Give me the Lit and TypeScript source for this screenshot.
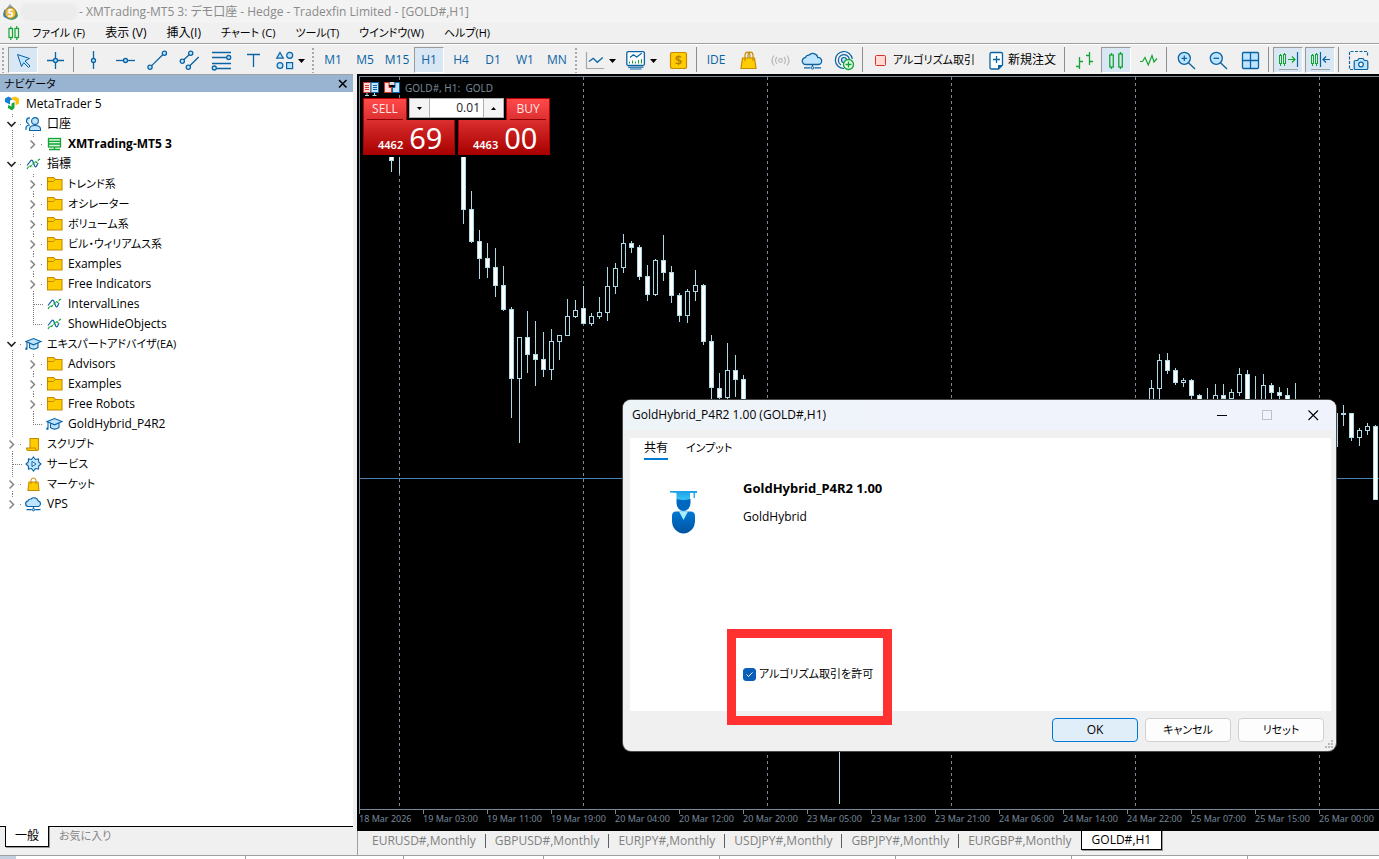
import { LitElement, html, svg, css, nothing, TemplateResult } from "lit";
import { customElement, property, state } from "lit/decorators.js";
import { classMap } from "lit/directives/class-map.js";

/* ---------- shared pieces ---------- */

const B = "#0a63a3";
const L = "#bfe4ff";
const G = "#12a533";
const Y = "#ffcc00";
const O = "#c68a00";

/* Labels that contain kana are set one step smaller than Latin and kanji ones. */
const hasKana = (s: string) => /[\u3041-\u30ff]/.test(s);

const base = css`
  :host {
    font-family: "Open Sans", "Noto Sans CJK JP", sans-serif;
    font-size: 12px;
    line-height: 16px;
    font-feature-settings: "palt";
    color: #000;
  }
  * {
    box-sizing: border-box;
  }
  button {
    font: inherit;
    font-feature-settings: inherit;
    color: inherit;
    background: none;
    border: 0;
    padding: 0;
    margin: 0;
    white-space: nowrap;
  }
  svg {
    display: block;
    flex: none;
  }
  .kana {
    font-size: 11px;
  }
`;

const candlePair = (x1: number, x2: number) => svg`
  <g stroke=${G} fill="none">
    <path d="M${x1 + 1} 6v2M${x1 + 1} 16v2M${x2 + 1} 5v2M${x2 + 1} 15v3"/>
    <rect x=${x1} y="7.5" width="2" height="8"/><rect x=${x2} y="6.5" width="2" height="9"/>
  </g>`;

const ICONS: Record<string, unknown> = {
  cursor: svg`<path d="M6.5 6.5 18.5 10.5 14 13 19 18 17.5 19.5 12.7 14.7 10.5 18.5Z" fill=${L} stroke=${B}/>`,
  cross: svg`<path d="M12.5 4v17M4 12.5h17" stroke=${B} stroke-width="1.3"/><circle cx="12.5" cy="12.5" r="2" fill=${L} stroke=${B} stroke-width="1.3"/>`,
  vline: svg`<path d="M12.5 3v18" stroke=${B} stroke-width="1.3"/><circle cx="12.5" cy="12.5" r="2" fill=${L} stroke=${B} stroke-width="1.3"/>`,
  hline: svg`<path d="M3 12.5h19" stroke=${B} stroke-width="1.3"/><circle cx="12.5" cy="12.5" r="2" fill=${L} stroke=${B} stroke-width="1.3"/>`,
  trend: svg`<g fill=${L} stroke=${B} stroke-width="1.3"><path d="M6.7 17.6 17.7 6.8"/><circle cx="5" cy="19.3" r="2.1"/><circle cx="19.4" cy="5.2" r="2.1"/></g>`,
  channel: svg`<g fill=${L} stroke=${B} stroke-width="1.3"><path d="M6.8 11.8 12.2 6.8M12.8 17.8 21.7 9"/><circle cx="5.3" cy="13.3" r="2.1"/><circle cx="13.7" cy="5.3" r="2.1"/><circle cx="11.3" cy="19.3" r="2.1"/></g>`,
  fibo: svg`<g fill=${L} stroke=${B} stroke-width="1.3"><path d="M3 4.5h19M3 9.5h14.5M3 15.5h19M7.5 20.5H22"/><circle cx="19.7" cy="9.5" r="2"/><circle cx="5.3" cy="20" r="2"/></g>`,
  text: svg`<path d="M6 6.5h13M12.5 6.5V19" stroke=${B} stroke-width="1.3"/>`,
  shapes: svg`<g fill=${L} stroke=${B} stroke-width="1.2"><path d="M7 4.5 10.3 10.2H3.7Z"/><circle cx="16.7" cy="7.3" r="3"/><circle cx="7" cy="17.5" r="2.9"/><rect x="13.6" y="14.6" width="6" height="6"/></g>`,
  chartline: svg`<path d="M2.5 4v16.5H20" fill="none" stroke="#a6a6a6" stroke-width="1.2"/><path d="M5 13.5 9.3 10.3 13.3 14.3 18.8 9.5" fill="none" stroke=${B} stroke-width="1.3"/>`,
  indicators: svg`<rect x="1.8" y="3.6" width="17.6" height="13.8" rx="1.5" fill="#fff" stroke=${B} stroke-width="1.3"/><path d="M5 9.5 8.3 6.8 11.7 9 16.7 5.3" fill="none" stroke=${B} stroke-width="1.2"/><path d="M4.5 13.5v2M7.5 12.5v3M10.5 13.5v2M13.5 12v3.5M16.5 11v4.5" stroke=${G}/><path d="M3 19.2h15.5M5 21h11.5" stroke=${B} stroke-width="1.2"/>`,
  dollar: svg`<rect x="4.5" y="4.5" width="16" height="16" rx="1.5" fill=${Y} stroke=${O} stroke-width="1.2"/><text x="12.5" y="17" text-anchor="middle" font-size="13" font-weight="600" fill="#b87a00">$</text>`,
  bag: svg`<path d="M6.500 10h12l1.500 10.500H5Z" fill=${Y} stroke=${O} stroke-width="1.2"/><path d="M9 13V8q0-3.800 2.500-3.800T14 8v2M12 10V8q0-3.800 2.500-3.800T17 8v5" fill="none" stroke=${O} stroke-width="1.2"/>`,
  signal: svg`<g fill="none" stroke="#b9b9b9" stroke-width="1.2"><circle cx="12.500" cy="12.500" r="1.800"/><path d="M9 9q-3 3.500 0 7M16 9q3 3.500 0 7M6 7.500q-4 5 0 10M19 7.500q4 5 0 10"/></g>`,
  cloud: svg`<path d="M7 16.500H6a3.500 3.500 0 0 1-.5-7 3.300 3.300 0 0 1 3.500-2.300A5 5 0 0 1 17.800 9.500a3.500 3.500 0 0 1 .7 7Z" fill=${L} stroke=${B} stroke-width="1.3"/><path d="M12.500 16.500v2M4 19.800h6.500M14.500 19.800H21" stroke=${B} stroke-width="1.200"/><circle cx="12.500" cy="19.800" r="1.300" fill=${L} stroke=${B}/>`,
  vps: svg`<g fill="none" stroke=${B} stroke-width="1.2"><path d="M12 20.500A8.500 8.500 0 1 1 20.300 11M9 17A5.600 5.600 0 1 1 17.500 11.500"/><circle cx="12" cy="12" r="2.500" fill=${L}/></g><circle cx="16.500" cy="16.500" r="5" fill="#e5f9e8" stroke=${G} stroke-width="1.300"/><path d="M16.500 13.500v6M13.500 16.500h6" stroke=${G} stroke-width="1.300"/>`,
  algo: svg`<rect x="6.500" y="7.500" width="10" height="10" rx="1" fill="#ffd9d4" stroke="#d9302c"/>`,
  order: svg`<path d="M7.500 4.500h9.500q1.500 0 1.500 1.500v11l-4 4H7.500Q6 21 6 19.500V6q0-1.500 1.500-1.500Z" fill="#fff" stroke=${B} stroke-width="1.300"/><path d="M14 21.500v-4.500h5Z" fill=${B}/><path d="M12.500 8v7M9 11.500h7" stroke=${B} stroke-width="1.300"/>`,
  bars: svg`<path d="M7.500 9v12M4 18.500h3.500M7.500 13.500H11M17.500 4v13M14 7.500h3.500M17.500 13.500H21" stroke=${G} stroke-width="1.300"/>`,
  candles: svg`<g stroke=${G} fill="none" stroke-width="1.300"><path d="M7.500 5v2M7.500 19v2M16.500 4v2M16.500 19v2"/><rect x="5.800" y="7" width="3.500" height="12"/><rect x="14.800" y="6" width="3.500" height="13"/></g>`,
  zigzag: svg`<path d="M4 13.500h2.500L9 9.500 12.300 17 16 7.500 18 14 21 10.500" fill="none" stroke=${G} stroke-width="1.200"/>`,
  zoomin: svg`<g stroke=${B} stroke-width="1.300"><path d="M14.500 14.800 21 21"/><circle cx="10.300" cy="10.300" r="6" fill=${L}/><path d="M10.300 7.500v5.600M7.500 10.300h5.600"/></g>`,
  zoomout: svg`<g stroke=${B} stroke-width="1.300"><path d="M14.500 14.800 21 21"/><circle cx="10.300" cy="10.300" r="6" fill=${L}/><path d="M7.500 10.300h5.600"/></g>`,
  tile: svg`<g stroke=${B} stroke-width="1.300"><rect x="4.500" y="4.500" width="16" height="16" rx="1" fill=${L}/><path d="M12.500 4.500v16M4.500 12.500h16"/></g>`,
  scroll: svg`${candlePair(3.5, 7.5)}<path d="M12 11.500h7M16 8.500l3 3-3 3" fill="none" stroke=${G} stroke-width="1.200"/><path d="M21.500 4v15" stroke=${B} stroke-width="1.200"/><path d="M3 21.500h19" stroke="#a0a0a0"/>`,
  shift: svg`${candlePair(3.5, 7.5)}<path d="M22 11.500h-7M18 8.500l-3 3 3 3M12.500 4v15" fill="none" stroke=${B} stroke-width="1.200"/><path d="M3 21.500h19" stroke="#a0a0a0"/>`,
  camera: svg`<path d="M7 21.500H3.500V3.500h18V9" fill="none" stroke=${B} stroke-width="1.200" stroke-dasharray="3 1.500"/><path d="M9.500 12.500h2l1.500-2h4l1.500 2h2q1.300 0 1.300 1.300v6.400q0 1.300-1.300 1.300h-11q-1.300 0-1.300-1.300v-6.400q0-1.300 1.300-1.300Z" fill=${L} stroke=${B} stroke-width="1.200"/><circle cx="15" cy="16.500" r="2.300" fill="#fff" stroke=${B} stroke-width="1.200"/>`,
};

const icon = (name: string) =>
  html`<svg width="24" height="24" viewBox="0 0 24 24" aria-hidden="true">${ICONS[name]}</svg>`;

/* ---------- toolbar ---------- */

type Tool =
  | { kind: "grip" | "sep" }
  | { kind: "icon" | "split"; icon: string; label: string; on?: boolean }
  | { kind: "text"; label: string; on?: boolean }
  | { kind: "wide"; icon: string; label: string };

const TOOLS: Tool[] = [
  { kind: "grip" },
  { kind: "icon", icon: "cursor", label: "カーソル", on: true },
  { kind: "icon", icon: "cross", label: "クロスヘア" },
  { kind: "sep" },
  { kind: "icon", icon: "vline", label: "垂直線" },
  { kind: "icon", icon: "hline", label: "水平線" },
  { kind: "icon", icon: "trend", label: "トレンドライン" },
  { kind: "icon", icon: "channel", label: "チャネル" },
  { kind: "icon", icon: "fibo", label: "フィボナッチ" },
  { kind: "icon", icon: "text", label: "テキスト" },
  { kind: "split", icon: "shapes", label: "図形" },
  { kind: "grip" },
  ...["M1", "M5", "M15", "H1", "H4", "D1", "W1", "MN"].map(
    (label): Tool => ({ kind: "text", label, on: label === "H1" })
  ),
  { kind: "grip" },
  { kind: "split", icon: "chartline", label: "チャート種別" },
  { kind: "split", icon: "indicators", label: "インディケータ" },
  { kind: "icon", icon: "dollar", label: "取引" },
  { kind: "sep" },
  { kind: "text", label: "IDE" },
  { kind: "icon", icon: "bag", label: "マーケット" },
  { kind: "icon", icon: "signal", label: "シグナル" },
  { kind: "icon", icon: "cloud", label: "VPS" },
  { kind: "icon", icon: "vps", label: "接続" },
  { kind: "sep" },
  { kind: "wide", icon: "algo", label: "アルゴリズム取引" },
  { kind: "wide", icon: "order", label: "新規注文" },
  { kind: "sep" },
  { kind: "icon", icon: "bars", label: "バーチャート" },
  { kind: "icon", icon: "candles", label: "ローソク足", on: true },
  { kind: "icon", icon: "zigzag", label: "ラインチャート" },
  { kind: "sep" },
  { kind: "icon", icon: "zoomin", label: "拡大" },
  { kind: "icon", icon: "zoomout", label: "縮小" },
  { kind: "icon", icon: "tile", label: "整列" },
  { kind: "sep" },
  { kind: "icon", icon: "scroll", label: "自動スクロール", on: true },
  { kind: "icon", icon: "shift", label: "チャートシフト", on: true },
  { kind: "sep" },
  { kind: "icon", icon: "camera", label: "スクリーンショット" },
];

@customElement("tool-bar")
class ToolBar extends LitElement {
  static styles = [
    base,
    css`
      :host {
        display: flex;
        height: 30px;
        align-items: center;
        background: #f0f0f0;
        border-top: 1px solid #fff;
        overflow: hidden;
      }
      .grip {
        flex: none;
        width: 7px;
        height: 26px;
        background: radial-gradient(circle at 2px 2px, #a8a8a8 1px, transparent 1px) 1px 0 / 4px 4px repeat-y;
      }
      .sep {
        flex: none;
        width: 6px;
        height: 25px;
        background: linear-gradient(#8d8d8d, #8d8d8d) 2px 0 / 1px 100% no-repeat;
      }
      .tool {
        flex: none;
        width: 30px;
        height: 26px;
        margin: 0 1px;
        border: 1px solid transparent;
        display: flex;
        align-items: center;
        justify-content: center;
        color: #0a63a3;
      }
      .on {
        background: #d9e6f4;
        border-color: #9a9a9a #fff #fff #9a9a9a;
      }
      .split {
        width: 39px;
        justify-content: flex-start;
        padding-left: 2px;
      }
      .wide {
        width: auto;
        color: #000;
        padding: 0 4px 0 1px;
      }
    `,
  ];

  private tool(t: Tool): TemplateResult {
    switch (t.kind) {
      case "grip":
      case "sep":
        return html`<span class=${t.kind}></span>`;
      case "text":
        return html`<button class=${classMap({ tool: true, on: !!t.on })}>${t.label}</button>`;
      case "wide":
        return html`<button class=${classMap({ tool: true, wide: true, kana: hasKana(t.label) })}>
          ${icon(t.icon)}<span>${t.label}</span>
        </button>`;
      case "split":
        return html`<button class="tool split" aria-label=${t.label}>
          ${icon(t.icon)}<svg width="11" height="8" viewBox="0 0 11 8"><path d="M1 3h7L4.500 7Z" fill="#000" /></svg>
        </button>`;
      case "icon":
        return html`<button class=${classMap({ tool: true, on: !!t.on })} aria-label=${t.label}>
          ${icon(t.icon)}
        </button>`;
    }
  }

  render() {
    return TOOLS.map((t) => this.tool(t));
  }
}

/* ---------- navigator ---------- */

const TREE_ICONS: Record<string, unknown> = {
  logo: svg`<path d="M4 4.500 7.500 2.500 12 5 9 6.500v4L4 8Z" fill="#1480d8"/><path d="M10 4 14 2.500l4 2v5l-3.500 2V7L11 5.500Z" fill="#ffc20a"/><path d="M10.500 9.500 13.500 8v6L11 16.500 7 14v-3l3.500 1.500Z" fill="#19a83b"/>`,
  people: svg`<g fill=${L} stroke=${B} stroke-width="1.100"><path d="M4 16v-2q0-3 4-3M8 4a3 3 0 0 0-1 6"/><circle cx="13" cy="7" r="3.400"/><path d="M7.500 16.500v-1.500q0-3.500 5.500-3.500t5.500 3.500v1.500Z"/></g>`,
  server: svg`<g fill="none" stroke=${G} stroke-width="1.300"><rect x="5.500" y="4.500" width="12" height="8.500" fill="#d5f5db"/><path d="M5.500 7.300h12M5.500 10h12M11.500 13v2.500M6 15.500h11"/></g>`,
  indicator: svg`<g fill="none" stroke-width="1.200"><path d="M5 11.500 9 6.500q1-.8 1.700.5l2 5q.8 1.500 1.800.3L16 9" stroke=${B}/><path d="M5 15l2-3 1.500.5L11 10l2-2.500 1.500 1L16.500 6l1.500-1" stroke=${G} stroke-dasharray="3 1"/></g>`,
  folder: svg`<path d="M4.500 3.500h6l2 2h6.500v10.500h-14.500Z" fill=${Y} stroke=${O} stroke-width="1.100"/><path d="M4.500 7.500h6l2-2" fill="none" stroke=${O}/>`,
  cap: svg`<g fill=${L} stroke=${B} stroke-width="1.100"><path d="M7.500 9v4.500q4 3.300 8.500 0V9"/><path d="M4 7.500 11.500 4.500l7.500 3L11.500 10.800Z"/><path d="M5 8v7.500M4 13.500v2.500" fill="none"/></g>`,
  script: svg`<path d="M8 4.500h8.500v11q-.5 1-1.500 1H6q-1.500-.5-1.500-2.500H8Z" fill=${Y} stroke=${O} stroke-width="1.100"/><path d="M8 14h5.500q0 2 1.500 2.500" fill="none" stroke=${O}/>`,
  gear: svg`<path d="M11.500 3l2 2.500 3-.5.2 3L19 10l-2.300 2-.2 3-3-.5L11.500 17l-2-2.500-3 .5-.2-3L4 10l2.300-2L6.500 5l3 .5Z" fill=${L} stroke=${B} stroke-width="1.100"/><path d="M10 7.500v5L14 10Z" fill="#fff" stroke=${B}/>`,
  market: svg`<path d="M7 8h9l1 8.500H6Z" fill=${Y} stroke=${O} stroke-width="1.100"/><path d="M9 10V6.500q0-2.500 2.500-2.500t2.500 2.500V10" fill="none" stroke=${O}/>`,
  cloud: svg`<path d="M6.500 12.500H6a2.900 2.900 0 0 1 0-5.700A3 3 0 0 1 9 5 4.300 4.300 0 0 1 16.100 6.800a3 3 0 0 1 .6 5.700Z" fill=${L} stroke=${B} stroke-width="1.200"/><path d="M11.500 12.500v2M4.500 15.700h5.300M13.200 15.700H18.500" stroke=${B} stroke-width="1.200"/><circle cx="11.500" cy="15.700" r="1.200" fill=${L} stroke=${B}/>`,
};

/* Guide cells, one per indent level:
   o open branch, c closed branch, e closed last branch, t tee, l elbow, v line */
const GUIDES: Record<string, unknown> = {
  o: svg`<path d="M11.500 0v3M11.500 16v4M19 10.500h3" class="dots"/><path d="M6.500 8 10.500 12 14.500 8" fill="none" stroke="#222" stroke-width="1.600"/>`,
  c: svg`<path d="M11.500 0v3M11.500 17v3M19 10.500h3" class="dots"/><path d="M8.500 6.500 12.500 10.500 8.500 14.500" fill="none" stroke="#858585" stroke-width="1.500"/>`,
  e: svg`<path d="M11.500 0v3M19 10.500h3" class="dots"/><path d="M8.500 6.500 12.500 10.500 8.500 14.500" fill="none" stroke="#858585" stroke-width="1.500"/>`,
  t: svg`<path d="M11.500 0v20M12 10.500h9" class="dots"/>`,
  l: svg`<path d="M11.500 0v10.500h9" class="dots"/>`,
  v: svg`<path d="M11.500 0v20" class="dots"/>`,
};

const TREE: Array<[string, string, string, boolean?]> = [
  ["", "logo", "MetaTrader 5"],
  ["o", "people", "口座"],
  ["ve", "server", "XMTrading-MT5 3", true],
  ["o", "indicator", "指標"],
  ["vc", "folder", "トレンド系"],
  ["vc", "folder", "オシレーター"],
  ["vc", "folder", "ボリューム系"],
  ["vc", "folder", "ビル・ウィリアムス系"],
  ["vc", "folder", "Examples"],
  ["vc", "folder", "Free Indicators"],
  ["vt", "indicator", "IntervalLines"],
  ["vl", "indicator", "ShowHideObjects"],
  ["o", "cap", "エキスパートアドバイザ(EA)"],
  ["vc", "folder", "Advisors"],
  ["vc", "folder", "Examples"],
  ["vc", "folder", "Free Robots"],
  ["vl", "cap", "GoldHybrid_P4R2"],
  ["c", "script", "スクリプト"],
  ["t", "gear", "サービス"],
  ["c", "market", "マーケット"],
  ["e", "cloud", "VPS"],
];

@customElement("navigator-panel")
class NavigatorPanel extends LitElement {
  static styles = [
    base,
    css`
      :host {
        display: flex;
        flex-direction: column;
        min-height: 0;
        background: #f0f0f0;
      }
      .head {
        display: flex;
        align-items: center;
        justify-content: space-between;
        height: 18px;
        padding: 0 5px 0 4px;
        border-top: 1px solid #a0a0a0;
        background: #99b4d1;
      }
      .tree {
        flex: 1;
        min-height: 0;
        overflow: hidden;
        margin: 0;
        padding: 2px 0 0 1px;
        list-style: none;
        background: #fff;
      }
      .row {
        display: flex;
        align-items: center;
        height: 20px;
      }
      .name {
        padding-left: 3px;
        white-space: nowrap;
      }
      .bold {
        font-weight: 700;
      }
      .dots {
        fill: none;
        stroke: #7d7d7d;
        stroke-dasharray: 1 1;
        shape-rendering: crispEdges;
      }
      .tabs {
        display: flex;
        height: 29px;
        padding-left: 5px;
        border-top: 1px solid #000;
        color: #858585;
      }
      .tab {
        height: 18px;
        padding: 0 10px;
      }
      .tab.active {
        margin-top: -1px;
        height: 21px;
        color: #000;
        background: #fff;
        border: solid #000;
        border-width: 0 1px 1px;
        box-shadow: 1px 1px 0 #999;
        padding: 0 9px;
      }
    `,
  ];

  render() {
    return html`
      <div class="head">
        <span class="kana">ナビゲータ</span>
        <button aria-label="閉じる">
          <svg width="10" height="10" viewBox="0 0 10 10">
            <path d="M1 1l7.500 7.500M8.500 1 1 8.500" stroke="#000" stroke-width="1.500" />
          </svg>
        </button>
      </div>
      <ul class="tree">
        ${TREE.map(
          ([guides, ic, name, bold]) => html`<li class="row">
            ${[...guides].map((g) => html`<svg width="21" height="20" viewBox="0 0 21 20">${GUIDES[g] ?? nothing}</svg>`)}
            <svg width="22" height="20" viewBox="0 0 22 20">${TREE_ICONS[ic]}</svg>
            <span class=${classMap({ name: true, bold: !!bold, kana: hasKana(name) })}>${name}</span>
          </li>`
        )}
      </ul>
      <div class="tabs">
        <button class="tab active">一般</button>
        <button class="tab kana">お気に入り</button>
      </div>
    `;
  }
}

/* ---------- chart ---------- */

/* [x, high, body top, body bottom, low, filled]; equal body values draw a bare wick */
type Candle = [number, number, number, number, number, 0 | 1];
const CANDLES: Candle[] = [
  [391, 150, 150, 161, 172, 1], [399, 150, 150, 150, 174, 1], [463, 150, 150, 210, 224, 1],
  [471, 191, 209, 242, 243, 1], [479, 230, 241, 259, 279, 1], [487, 243, 258, 268, 278, 1],
  [495, 248, 267, 286, 297, 1], [503, 266, 285, 310, 311, 1], [511, 307, 309, 379, 418, 1],
  [519, 337, 337, 379, 443, 0], [527, 311, 337, 355, 373, 1], [535, 321, 354, 360, 386, 1],
  [543, 332, 359, 370, 377, 1], [551, 329, 341, 370, 380, 0], [559, 335, 335, 342, 360, 0],
  [567, 299, 316, 336, 336, 0], [575, 300, 310, 317, 318, 0], [583, 286, 308, 324, 324, 1],
  [591, 313, 316, 324, 326, 0], [599, 297, 312, 317, 319, 0], [607, 267, 286, 313, 321, 0],
  [615, 263, 268, 287, 294, 0], [623, 234, 243, 268, 273, 0], [631, 241, 243, 248, 253, 1],
  [639, 245, 247, 277, 280, 1], [647, 265, 276, 295, 301, 1], [655, 259, 260, 295, 296, 0],
  [663, 235, 260, 273, 281, 1], [671, 266, 272, 296, 303, 1], [679, 293, 295, 316, 322, 1],
  [687, 289, 291, 316, 323, 0], [695, 270, 285, 292, 301, 0], [703, 284, 285, 342, 345, 1],
  [711, 335, 341, 388, 420, 1], [719, 373, 388, 398, 402, 1], [727, 343, 370, 398, 402, 0],
  [735, 355, 370, 380, 397, 1], [743, 375, 379, 420, 430, 1], [839, 640, 640, 640, 804, 1],
  [1143, 399, 410, 420, 420, 0], [1151, 380, 388, 420, 420, 0], [1159, 354, 360, 389, 399, 0],
  [1167, 353, 360, 371, 374, 1], [1175, 368, 370, 383, 385, 1], [1183, 378, 380, 383, 387, 0],
  [1191, 379, 380, 396, 402, 1], [1199, 394, 395, 410, 410, 1], [1207, 388, 405, 410, 410, 0],
  [1215, 384, 395, 410, 410, 0], [1223, 384, 395, 399, 402, 1], [1231, 389, 392, 399, 402, 0],
  [1239, 368, 374, 393, 396, 0], [1247, 370, 374, 410, 410, 1], [1255, 376, 405, 410, 410, 0],
  [1263, 374, 385, 410, 410, 0], [1271, 383, 385, 393, 402, 1], [1279, 387, 392, 396, 402, 1],
  [1287, 388, 395, 410, 410, 1], [1295, 383, 399, 410, 410, 0], [1335, 413, 413, 447, 447, 0],
  [1343, 405, 413, 414, 426, 0], [1351, 413, 413, 438, 441, 1], [1359, 428, 430, 438, 446, 0],
  [1367, 423, 426, 431, 435, 0], [1375, 425, 426, 500, 500, 1],
];

const TIMES = [
  "18 Mar 2026", "19 Mar 03:00", "19 Mar 11:00", "19 Mar 19:00", "20 Mar 04:00", "20 Mar 12:00",
  "20 Mar 20:00", "23 Mar 05:00", "23 Mar 13:00", "23 Mar 21:00", "24 Mar 06:00", "24 Mar 14:00",
  "24 Mar 22:00", "25 Mar 07:00", "25 Mar 15:00", "26 Mar 00:00",
];

@customElement("price-chart")
class PriceChart extends LitElement {
  @property() volume = "0.01";

  static styles = [
    base,
    css`
      :host {
        display: flex;
        flex-direction: column;
        position: relative;
        min-height: 0;
        min-width: 0;
        padding: 2px 0 0 2px;
        background: #000;
        color: #778899;
        overflow: hidden;
      }
      .plot {
        flex: 1;
        min-height: 0;
        width: 100%;
        border: solid #778899;
        border-width: 1px 0 1px 1px;
        shape-rendering: crispEdges;
      }
      .axis {
        display: flex;
        flex: none;
        height: 21px;
        overflow: hidden;
        font-family: "Noto Sans", sans-serif;
        font-size: 9px;
        line-height: 17px;
      }
      .time {
        flex: none;
        width: 64px;
        white-space: nowrap;
        background: linear-gradient(#778899, #778899) 0 0 / 1px 4px no-repeat;
      }
      .overlay {
        position: absolute;
        left: 6px;
        top: 6px;
      }
      .symbol {
        display: flex;
        align-items: center;
        gap: 5px;
        height: 16px;
        font-family: "Noto Sans", sans-serif;
        font-size: 10px;
        white-space: pre;
      }
      .panel {
        width: 187px;
        background: #000;
        margin-top: 2px;
        padding-bottom: 2px;
        color: #fff;
      }
      .top,
      .prices {
        display: flex;
        justify-content: space-between;
      }
      .side {
        width: 44px;
        height: 22px;
        background: linear-gradient(#ff4a4a, #dc2f2f);
        border: 1px solid #b80000;
        border-bottom: 0;
        color: #ffe6e6;
        padding: 0 3px;
      }
      .side span {
        display: block;
        height: 21px;
        line-height: 19px;
        border-bottom: 1px solid #8e0000;
      }
      .volume {
        display: flex;
        width: 95px;
        height: 20px;
        background: #fff;
        border: 1px solid #b0b0b0;
      }
      .step {
        width: 19px;
        display: flex;
        align-items: center;
        justify-content: center;
        background: #f4f4f4;
      }
      .lots {
        flex: 1;
        min-width: 0;
        border: solid #b0b0b0;
        border-width: 0 1px;
        padding: 0 3px;
        text-align: right;
        font: inherit;
        color: #222;
        background: #fff;
        border-radius: 0;
      }
      .price {
        display: flex;
        align-items: baseline;
        gap: 6px;
        width: 92px;
        height: 35px;
        padding: 0 0 0 14px;
        background: linear-gradient(#dc2f2f, #a80000);
        border: 1px solid #a80000;
        border-top: 0;
        line-height: 36px;
        font-size: 11px;
        font-weight: 600;
        font-family: "Noto Sans", sans-serif;
      }
      .big {
        font-size: 29px;
        font-weight: 400;
      }
    `,
  ];

  private candle([x, high, top, bottom, low, filled]: Candle) {
    return svg`
      <path d="M${x + 0.5} ${high}V${top}M${x + 0.5} ${bottom}V${low}" stroke="#add8e6"/>
      ${bottom > top
        ? svg`<rect x=${x - 1.5} y=${top + 0.5} width="4" height=${Math.max(bottom - top - 1, 1)}
            fill=${filled ? "#fff" : "#000"} stroke="#add8e6"/>`
        : nothing}`;
  }

  render() {
    return html`
      <svg class="plot" role="img" aria-label="GOLD# H1">
        <g transform="translate(-360 -77)" fill="none">
          ${[399, 583, 767, 951, 1135, 1319].map(
            (x) => svg`<path d="M${x + 0.5} 77V1600" stroke="#778899" stroke-dasharray="3 3"/>`
          )}
          <path d="M360 478.500H4000" stroke="#4682b4" />
          ${CANDLES.map((c) => this.candle(c))}
        </g>
      </svg>
      <div class="axis">${TIMES.map((t) => html`<span class="time">${t}</span>`)}</div>
      <div class="overlay">
        <div class="symbol">
          <svg width="16" height="15" viewBox="0 0 16 15">
            <rect x=".5" y="1.500" width="7.500" height="10" fill="#ffe0dc" stroke="#d9302c" />
            <rect x="8" y="1.500" width="7.500" height="10" fill=${L} stroke="#0a63a3" />
            <path d="M2 4.500h4M2 6.500h4M2 8.500h4" stroke="#d9302c" />
            <path d="M10 4.500h4M10 6.500h4M10 8.500h4" stroke="#0a63a3" />
            <path d="M4 12v2M11.500 12v2M2 14.500h4M9.500 14.500h4" stroke="#add8e6" />
          </svg>
          <svg width="16" height="15" viewBox="0 0 16 15">
            <path d="M.5 1.500H5v5h2.500v5h-7Z" fill="#ffe0dc" stroke="#d9302c" />
            <path d="M15.500 1.500H11v5H8.500v5h7Z" fill=${L} stroke="#0a63a3" />
            <rect x="5.500" y="1" width="5" height="3" fill="#ddd" />
          </svg>
          <span>GOLD#, H1:  GOLD</span>
        </div>
        <div class="panel">
          <div class="top">
            <button class="side"><span>SELL</span></button>
            <div class="volume">
              <button class="step" aria-label="減らす">
                <svg width="7" height="5" viewBox="0 0 7 5"><path d="M1 1h5L3.500 4Z" /></svg>
              </button>
              <input class="lots" aria-label="ロット" .value=${this.volume} />
              <button class="step" aria-label="増やす">
                <svg width="7" height="5" viewBox="0 0 7 5"><path d="M1 4h5L3.500 1Z" /></svg>
              </button>
            </div>
            <button class="side"><span>BUY</span></button>
          </div>
          <div class="prices">
            <button class="price"><span>4462</span><span class="big">69</span></button>
            <button class="price"><span>4463</span><span class="big">00</span></button>
          </div>
        </div>
      </div>
    `;
  }
}

/* ---------- expert dialog ---------- */

@customElement("expert-dialog")
class ExpertDialog extends LitElement {
  @state() private allowed = true;

  static styles = [
    base,
    css`
      :host {
        display: flex;
        flex-direction: column;
        width: 713px;
        height: 351px;
        border-radius: 8px;
        background: #f0f0f0;
        box-shadow: 0 0 0 1px #4a4a4a;
      }
      .head {
        display: flex;
        align-items: center;
        height: 30px;
        padding-left: 9px;
        border-radius: 8px 8px 0 0;
        background: linear-gradient(90deg, #edf4f7, #f0f3fb 40%);
      }
      .title {
        flex: 1;
      }
      .win {
        width: 46px;
        display: flex;
        justify-content: center;
      }
      .page {
        flex: 1;
        margin: 8px 5px 0 7px;
        background: #fff;
        display: flex;
        flex-direction: column;
      }
      .tabs {
        display: flex;
        gap: 18px;
        padding: 2px 14px 0;
      }
      .tab {
        padding-bottom: 2px;
        border-bottom: 2px solid transparent;
      }
      .active {
        border-color: #0078d4;
      }
      .about {
        display: grid;
        grid-template-columns: 113px 1fr;
        padding-top: 20px;
      }
      .about svg {
        margin: 9px 0 0 38px;
      }
      .name {
        margin: 0 0 13px;
        font-family: "Noto Sans", sans-serif;
        font-size: 13px;
        line-height: 16px;
        font-weight: 700;
      }
      .about p {
        margin: 0;
      }
      .check {
        display: flex;
        align-items: center;
        gap: 3px;
        margin: auto 0 29px 113px;
      }
      .box {
        appearance: none;
        width: 13px;
        height: 13px;
        margin: 0;
        border: 1px solid #767676;
        border-radius: 3px;
        background: #fff;
      }
      .box:checked {
        border-color: #0a5fb8;
        background: #0a5fb8
          url('data:image/svg+xml,<svg xmlns="http://www.w3.org/2000/svg" viewBox="0 0 11 11"><path d="M2.500 5.500l2 2 4-4" fill="none" stroke="white"/></svg>');
      }
      .foot {
        display: flex;
        justify-content: flex-end;
        align-items: flex-start;
        gap: 7px;
        height: 40px;
        padding: 7px 12px 0;
        position: relative;
      }
      .btn {
        width: 86px;
        height: 24px;
        border: 1px solid #d0d0d0;
        border-radius: 4px;
        background: #fdfdfd;
      }
      .primary {
        border-color: #0078d4;
        background: #e0eef9;
      }
      .resize {
        position: absolute;
        right: 2px;
        bottom: 2px;
      }
      .mark {
        position: absolute;
        left: 104px;
        top: 229px;
        width: 165px;
        height: 96px;
        border: 9px solid #ff3131;
        pointer-events: none;
      }
    `,
  ];

  render() {
    return html`
      <div class="head">
        <span class="title">GoldHybrid_P4R2 1.00 (GOLD#,H1)</span>
        <button class="win" aria-label="最小化">
          <svg width="11" height="11" viewBox="0 0 11 11"><path d="M1 5.500h10" stroke="#000" /></svg>
        </button>
        <button class="win" aria-label="最大化" disabled>
          <svg width="11" height="11" viewBox="0 0 11 11">
            <rect x=".5" y=".5" width="9" height="9" fill="none" stroke="#c0c2c8" />
          </svg>
        </button>
        <button class="win" aria-label="閉じる">
          <svg width="11" height="11" viewBox="0 0 11 11">
            <path d="M.5.500l9.500 9.500M10 .500l-9.500 9.500" stroke="#000" stroke-width="1.100" />
          </svg>
        </button>
      </div>
      <div class="page">
        <div class="tabs">
          <button class="tab active">共有</button>
          <button class="tab kana">インプット</button>
        </div>
        <div class="about">
          <svg width="30" height="46" viewBox="0 0 30 46" aria-hidden="true">
            <defs>
              <linearGradient id="cap" x2="0" y2="1"><stop stop-color="#1a9fe8" /><stop offset="1" stop-color="#38c4f4" /></linearGradient>
              <linearGradient id="suit" x2="0" y2="1"><stop stop-color="#0078d4" /><stop offset="1" stop-color="#0053a0" /></linearGradient>
            </defs>
            <path d="M8.500 10h14v4a7 8 0 0 1-14 0Z" fill="#0068c0" />
            <path d="M2 2h27v2h-2v5h-1.500V4H22v6q-6.500 2-13.500 0V4L2 3.500Z" fill="url(#cap)" />
            <path d="M4 27q0-4.500 4-4.500h14.500q4.500 0 4.500 4.500v5a11.500 12.500 0 0 1-23 0Z" fill="url(#suit)" />
            <path d="M11 22.500h9L15.500 31Z" fill="#a6ecfb" />
          </svg>
          <div>
            <h2 class="name">GoldHybrid_P4R2 1.00</h2>
            <p>GoldHybrid</p>
          </div>
        </div>
        <label class="check kana">
          <input
            class="box"
            type="checkbox"
            .checked=${this.allowed}
            @change=${(e: Event) => (this.allowed = (e.target as HTMLInputElement).checked)}
          />アルゴリズム取引を許可
        </label>
      </div>
      <div class="foot">
        <button class="btn primary">OK</button>
        <button class="btn kana">キャンセル</button>
        <button class="btn kana">リセット</button>
        <svg class="resize" width="9" height="9" viewBox="0 0 9 9">
          <path d="M6 0h2v2H6ZM3 3h2v2H3ZM6 3h2v2H6ZM0 6h2v2H0ZM3 6h2v2H3ZM6 6h2v2H6Z" fill="#b8b8b8" />
        </svg>
      </div>
      <div class="mark"></div>
    `;
  }
}

/* ---------- application ---------- */

const MENU = ["ファイル (F)", "表示 (V)", "挿入(I)", "チャート (C)", "ツール(T)", "ウインドウ(W)", "ヘルプ(H)"];
const CHARTS = ["EURUSD#,Monthly", "GBPUSD#,Monthly", "EURJPY#,Monthly", "USDJPY#,Monthly", "GBPJPY#,Monthly", "EURGBP#,Monthly"];

@customElement("app-root")
class AppRoot extends LitElement {
  static styles = [
    base,
    css`
      :host {
        display: flex;
        flex-direction: column;
        position: relative;
        height: 100vh;
        overflow: hidden;
        background: #f0f0f0;
      }
      .titlebar {
        display: flex;
        align-items: center;
        flex: none;
        height: 23px;
        padding-left: 2px;
        background: #f3f3f3;
        color: #8a8a8a;
        white-space: nowrap;
      }
      .account {
        width: 58px;
        height: 18px;
        margin: 0 1px;
        border-radius: 8px;
        background: #ececec;
        filter: blur(1px);
      }
      .menu {
        display: flex;
        align-items: center;
        flex: none;
        height: 20px;
        padding-left: 8px;
      }
      .menu button {
        padding: 0 10px;
      }
      .line {
        flex: none;
        height: 1px;
        background: #a0a0a0;
      }
      tool-bar {
        flex: none;
      }
      .work {
        display: grid;
        grid-template-columns: 353px 1fr;
        column-gap: 4px;
        flex: 1;
        min-height: 0;
      }
      .main {
        display: flex;
        flex-direction: column;
        min-width: 0;
        min-height: 0;
      }
      price-chart {
        flex: 1;
      }
      .charts {
        display: flex;
        align-items: flex-start;
        flex: none;
        height: 24px;
        padding-left: 5px;
        color: #808080;
        border-left: 1px solid #a0a0a0;
      }
      .chart {
        padding: 2px 9px;
        height: 18px;
      }
      .bar {
        width: 1px;
        height: 14px;
        margin-top: 3px;
        background: #606060;
      }
      .current {
        height: 20px;
        margin: -1px 0 0;
        padding: 0 10px;
        color: #000;
        background: #fff;
        border: 1px solid #000;
        box-shadow: 1px 1px 0 #999;
      }
      .status {
        display: grid;
        grid-template-columns: 246px 158px 140px repeat(4, 176px) 1fr;
        flex: none;
        height: 4px;
        border-top: 1px solid #a0a0a0;
        background: linear-gradient(90deg, #c3d0e0 16px, #fff 16px);
      }
      .cell {
        border-right: 1px solid #a0a0a0;
      }
      expert-dialog {
        position: absolute;
        right: 43px;
        top: 400px;
      }
    `,
  ];

  render() {
    return html`
      <header class="titlebar">
        <svg width="17" height="18" viewBox="0 0 17 18" aria-hidden="true">
          <path d="M4 6 8 1l5 5-1 3H4Z" fill="#8fa6b3" />
          <path d="M3 6q-3 5-1 8l6 3-2-7Z" fill="#2b7fc0" />
          <path d="M8 17q6 0 8-4 0-4-3-7l-2 6Z" fill="#3f9b6c" />
          <circle cx="8.500" cy="10" r="5.500" fill="#e8c04a" stroke="#a67d1c" />
          <text x="8.500" y="13.500" text-anchor="middle" font-size="10" font-weight="700" fill="#fff">5</text>
        </svg>
        <span class="account"></span>
        <span>- XMTrading-MT5 3: デモ口座 - Hedge - Tradexfin Limited - [GOLD#,H1]</span>
      </header>
      <nav class="menu">
        <svg width="14" height="16" viewBox="0 0 14 16" aria-hidden="true">
          <g fill="none" stroke="#12a533" stroke-width="1.200">
            <rect x="1" y="3.500" width="3.500" height="9" /><rect x="7" y="3.500" width="3.500" height="9" />
            <path d="M2.800 1.500v2M2.800 12.500v2.500M8.800 1v2.500M8.800 12.500v2.500" />
          </g>
        </svg>
        ${MENU.map((m) => html`<button class=${classMap({ kana: hasKana(m) })}>${m}</button>`)}
      </nav>
      <div class="line"></div>
      <tool-bar></tool-bar>
      <div class="work">
        <navigator-panel></navigator-panel>
        <main class="main">
          <price-chart></price-chart>
          <div class="charts">
            ${CHARTS.map(
              (c, i) => html`${i ? html`<span class="bar"></span>` : nothing}<button class="chart">${c}</button>`
            )}
            <button class="current">GOLD#,H1</button>
          </div>
        </main>
      </div>
      <footer class="status">${[0, 1, 2, 3, 4, 5, 6].map(() => html`<span class="cell"></span>`)}</footer>
      <expert-dialog></expert-dialog>
    `;
  }
}
